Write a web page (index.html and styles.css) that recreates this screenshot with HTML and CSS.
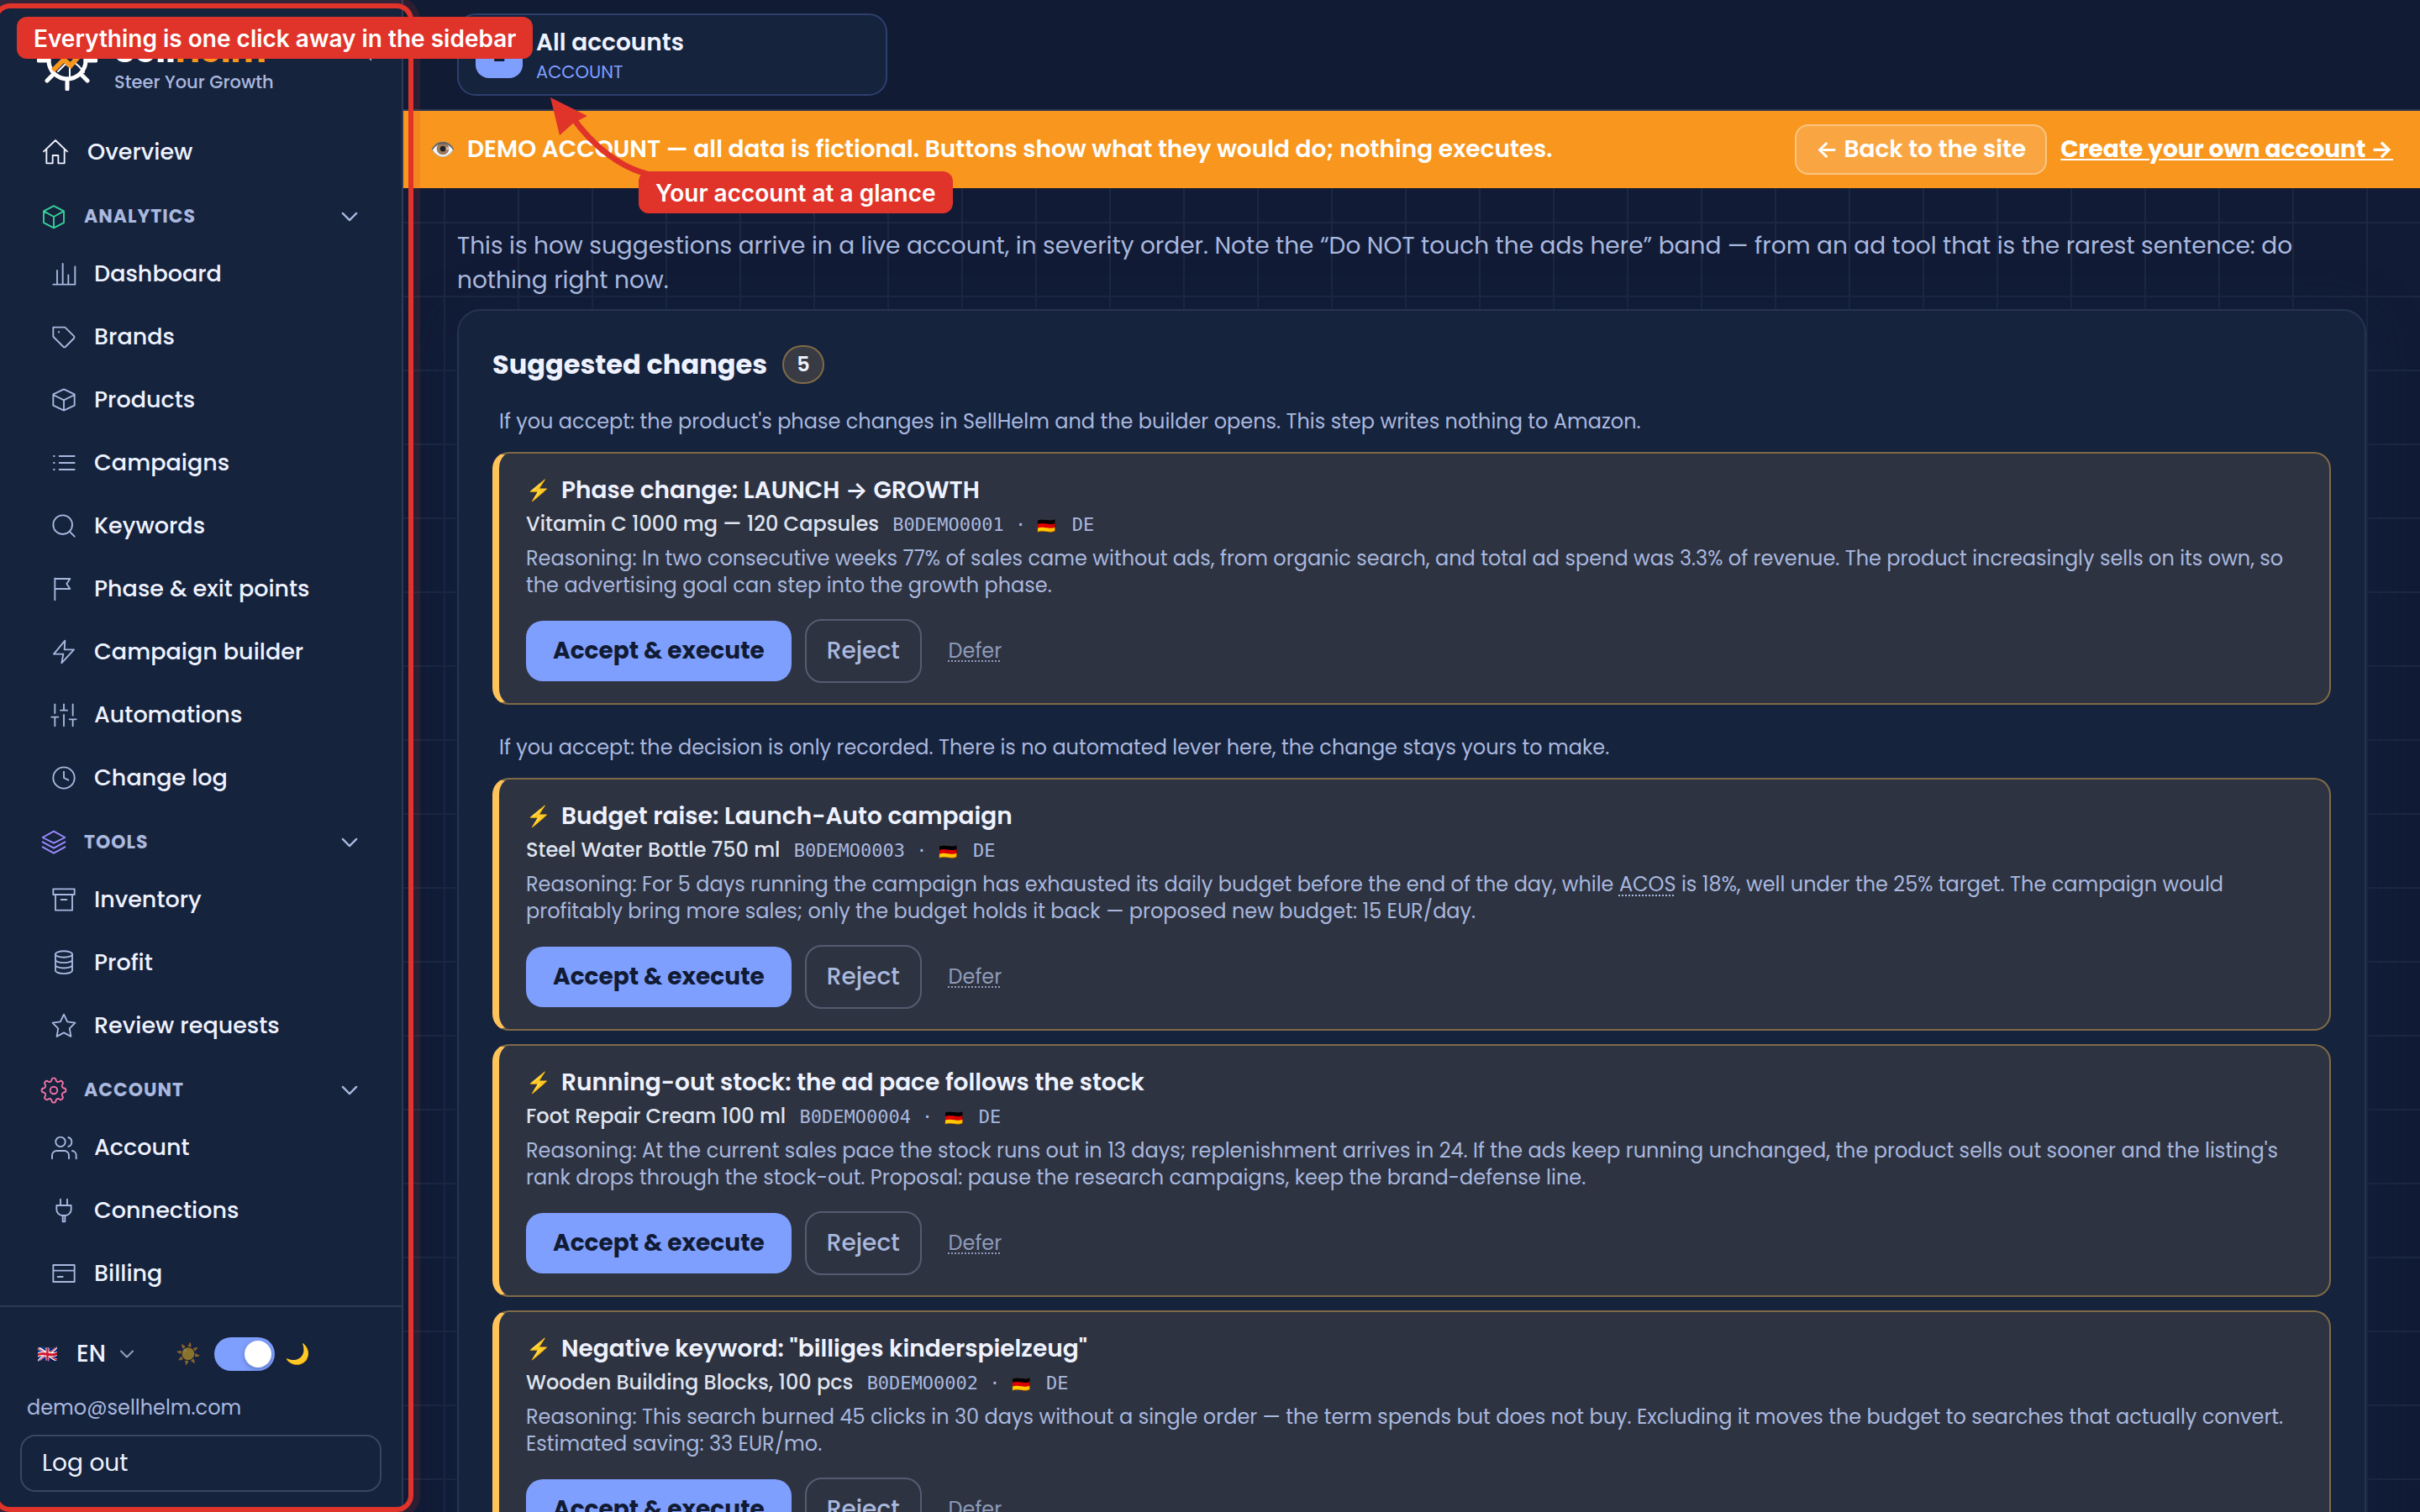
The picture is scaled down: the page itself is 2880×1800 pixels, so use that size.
FILE: index.html
```html
<!doctype html>
<html lang="en">
<head>
<meta charset="utf-8">
<meta name="viewport" content="width=device-width, initial-scale=1">
<title>SellHelm – Suggested changes</title>
<link rel="stylesheet" href="styles.css">
</head>
<body>

<svg class="sprite" aria-hidden="true">
	<symbol id="i-home" viewBox="0 0 24 24"><path d="M1.5 11.5 12 1.5l10.5 10M4 9.5V22h5.5v-7h5v7H20V9.5"/></symbol>
	<symbol id="i-cube" viewBox="0 0 24 24"><path d="M12 2.3 21 7v10.3L12 22l-9-4.7V7zM3 7l9 5 9-5M12 12v10"/></symbol>
	<symbol id="i-chart" viewBox="0 0 24 24"><path d="M2.500 21.500h19.500V5.500M6 21.500V9M11 21.500V3M16 21.500V13"/></symbol>
	<symbol id="i-tag" viewBox="0 0 24 24"><path d="M2.500 3.500v8.300l9 9a1.500 1.500 0 0 0 2 0l7.500-7.500a1.500 1.500 0 0 0 0-2l-8-7.800z"/><path d="M7.500 7.500v.5"/></symbol>
	<symbol id="i-box" viewBox="0 0 24 24"><path d="M12 2.500 21.500 7v10L12 21.500 2.500 17V7zM2.500 7.500 12 12.300l9.500-4.800M12 12.300v9"/></symbol>
	<symbol id="i-list" viewBox="0 0 24 24"><path d="M8 6h13.500M8 12h13.500M8 18h13.500M3 6h.5M3 12h.5M3 18h.5"/></symbol>
	<symbol id="i-search" viewBox="0 0 24 24"><circle cx="11" cy="11" r="8.500"/><path d="m17 17 4.500 4.500"/></symbol>
	<symbol id="i-flag" viewBox="0 0 24 24"><path d="M4 22V2.500M4 3h13.500l-3 4.500 3 4.500H4"/></symbol>
	<symbol id="i-bolt" viewBox="0 0 24 24"><path d="M13 2 3 14h8.500L10 22l11-12h-8.500z"/></symbol>
	<symbol id="i-sliders" viewBox="0 0 24 24"><path d="M4 2.500v8M4 14v8M1 14h6M12 2.500V8M12 12v10M9 8h6M20 2.500v10M20 16v6M17 16h6"/></symbol>
	<symbol id="i-clock" viewBox="0 0 24 24"><circle cx="12" cy="12" r="9.500"/><path d="M12 6.500V12l4 2"/></symbol>
	<symbol id="i-layers" viewBox="0 0 24 24"><path d="m12 2 10 5.500-10 5L2 7.500zM2 11.500l10 5.500 10-5.500M2 16l10 5.500L22 16"/></symbol>
	<symbol id="i-archive" viewBox="0 0 24 24"><path d="M2.500 2.500h19v5h-19zM4.500 7.500v14h15v-14M9.500 12h5"/></symbol>
	<symbol id="i-coins" viewBox="0 0 24 24"><ellipse cx="12" cy="4.500" rx="7.500" ry="2.800"/><path d="M4.500 4.500v14.500c0 1.600 3.300 2.800 7.500 2.800s7.500-1.200 7.500-2.800V4.500M4.500 9.300c0 1.600 3.300 2.800 7.500 2.800s7.500-1.200 7.500-2.800M4.500 14.100c0 1.600 3.300 2.800 7.500 2.800s7.500-1.200 7.500-2.800"/></symbol>
	<symbol id="i-star" viewBox="0 0 24 24"><path d="m12 2 3.100 6.500 7 1-5 5 1.200 7.200L12 18.300l-6.300 3.400 1.200-7.200-5-5 7-1z"/></symbol>
	<symbol id="i-gear" viewBox="0 0 24 24"><circle cx="12" cy="12" r="3.200"/><path d="M10.100 2.800c.3-2.300 3.500-2.300 3.800 0 .2 1.500 1.900 2.200 3.100 1.300 1.900-1.400 4.100.8 2.700 2.700-.9 1.200-.1 3.100 1.400 3.300 2.300.3 2.300 3.500 0 3.800-1.500.2-2.300 2.100-1.400 3.300 1.400 1.900-.8 4.100-2.700 2.700-1.200-.9-2.900-.2-3.100 1.300-.3 2.300-3.500 2.300-3.800 0-.2-1.500-1.900-2.200-3.100-1.300-1.900 1.400-4.100-.8-2.700-2.700.9-1.200.1-3.100-1.400-3.300-2.300-.3-2.300-3.500 0-3.800 1.500-.2 2.300-2.100 1.400-3.300-1.400-1.900.8-4.100 2.700-2.700 1.200.9 2.900.2 3.100-1.300z"/></symbol>
	<symbol id="i-users" viewBox="0 0 24 24"><circle cx="9" cy="7" r="4.300"/><path d="M1.500 22v-3a4 4 0 0 1 4-4h7a4 4 0 0 1 4 4v3M16 3a4.300 4.300 0 0 1 0 8.200M23 22v-3a4 4 0 0 0-3.500-4"/></symbol>
	<symbol id="i-plug" viewBox="0 0 24 24"><path d="M9 7V2M15 7V2M5.500 7.500h13V11a5.500 5.500 0 0 1-5 5.500h-3a5.500 5.500 0 0 1-5-5.500zM11 16.500V22h2v-5.500"/></symbol>
	<symbol id="i-card" viewBox="0 0 24 24"><path d="M2.500 4.500h19v15h-19zM2.500 9.500h19M6.500 15h4.500"/></symbol>
	<symbol id="i-down" viewBox="0 0 24 24"><path d="m5 8.500 7 7 7-7"/></symbol>
	<symbol id="i-left" viewBox="0 0 24 24"><path d="m15 4-7 8 7 8"/></symbol>
</svg>

<div class="app">
	<aside class="sidebar">
		<div class="brand">
			<svg class="logo" viewBox="0 0 72 72" aria-hidden="true">
				<circle cx="36" cy="36" r="22"/>
				<path d="M36 2v12M36 58v12M2 36h12M58 36h12M12 12l8 8M60 12l-8 8M12 60l8-8M60 60l-8-8"/>
				<path class="logo-thin" d="m25 49 9-9 5 4v12M44 38l6 5 6 7"/>
				<path class="logo-trend" d="m19 48 13-13 8 7 13-15"/>
			</svg>
			<div class="brand-text">
				<div class="brand-name">Sell<span>Helm</span></div>
				<div class="brand-sub">Steer Your Growth</div>
			</div>
			<button class="collapse" type="button" aria-label="Collapse"><svg class="icon"><use href="#i-left"/></svg></button>
		</div>

		<nav class="nav">
			<a class="nav-top" href="#"><svg class="icon"><use href="#i-home"/></svg>Overview</a>

			<button class="nav-group green" type="button"><svg class="icon"><use href="#i-cube"/></svg>ANALYTICS<svg class="icon caret"><use href="#i-down"/></svg></button>
			<ul>
				<li><a href="#"><svg class="icon"><use href="#i-chart"/></svg>Dashboard</a></li>
				<li><a href="#"><svg class="icon"><use href="#i-tag"/></svg>Brands</a></li>
				<li><a href="#"><svg class="icon"><use href="#i-box"/></svg>Products</a></li>
				<li><a href="#"><svg class="icon"><use href="#i-list"/></svg>Campaigns</a></li>
				<li><a href="#"><svg class="icon"><use href="#i-search"/></svg>Keywords</a></li>
				<li><a href="#"><svg class="icon"><use href="#i-flag"/></svg>Phase &amp; exit points</a></li>
				<li><a href="#"><svg class="icon"><use href="#i-bolt"/></svg>Campaign builder</a></li>
				<li><a href="#"><svg class="icon"><use href="#i-sliders"/></svg>Automations</a></li>
				<li><a href="#"><svg class="icon"><use href="#i-clock"/></svg>Change log</a></li>
			</ul>

			<button class="nav-group violet" type="button"><svg class="icon"><use href="#i-layers"/></svg>TOOLS<svg class="icon caret"><use href="#i-down"/></svg></button>
			<ul>
				<li><a href="#"><svg class="icon"><use href="#i-archive"/></svg>Inventory</a></li>
				<li><a href="#"><svg class="icon"><use href="#i-coins"/></svg>Profit</a></li>
				<li><a href="#"><svg class="icon"><use href="#i-star"/></svg>Review requests</a></li>
			</ul>

			<button class="nav-group pink" type="button"><svg class="icon"><use href="#i-gear"/></svg>ACCOUNT<svg class="icon caret"><use href="#i-down"/></svg></button>
			<ul>
				<li><a href="#"><svg class="icon"><use href="#i-users"/></svg>Account</a></li>
				<li><a href="#"><svg class="icon"><use href="#i-plug"/></svg>Connections</a></li>
				<li><a href="#"><svg class="icon"><use href="#i-card"/></svg>Billing</a></li>
			</ul>
		</nav>

		<div class="side-foot">
			<div class="prefs">
				<label class="lang">
					<span class="flag">🇬🇧</span>
					<select aria-label="Language"><option>EN</option></select>
					<svg class="icon"><use href="#i-down"/></svg>
				</label>
				<label class="theme">
					<span class="sun">☀️</span>
					<input type="checkbox" aria-label="Dark theme" checked>
					<span>🌙</span>
				</label>
			</div>
			<div class="email">demo@sellhelm.com</div>
			<button class="logout" type="button">Log out</button>
		</div>
	</aside>

	<div class="page">
		<header class="topbar">
			<button class="account" type="button">
				<span class="account-badge">2</span>
				<span class="account-text"><b>All accounts</b><small>ACCOUNT</small></span>
			</button>
		</header>

		<div class="banner">
			<span class="eye">👁️</span>
			<span class="banner-text">DEMO ACCOUNT — all data is fictional. Buttons show what they would do; nothing executes.</span>
			<a class="back" href="#">← Back to the site</a>
			<a class="create" href="#">Create your own account →</a>
		</div>

		<main class="content">
			<p class="intro">This is how suggestions arrive in a live account, in severity order. Note the “Do NOT touch the ads here” band — from an ad tool that is the rarest sentence: do nothing right now.</p>

			<section class="panel">
				<h2>Suggested changes <span class="count">5</span></h2>

				<p class="hint">If you accept: the product's phase changes in SellHelm and the builder opens. This step writes nothing to Amazon.</p>
				<article class="item">
					<h3><span class="zap">⚡</span>Phase change: LAUNCH → GROWTH</h3>
					<div class="product">Vitamin C 1000 mg — 120 Capsules <code>B0DEMO0001 · <span class="flag">🇩🇪</span> DE</code></div>
					<p class="reason">Reasoning: In two consecutive weeks 77% of sales came without ads, from organic search, and total ad spend was 3.3% of revenue. The product increasingly sells on its own, so the advertising goal can step into the growth phase.</p>
					<div class="actions">
						<button class="accept" type="button">Accept &amp; execute</button>
						<button class="reject" type="button">Reject</button>
						<button class="defer" type="button">Defer</button>
					</div>
				</article>

				<p class="hint">If you accept: the decision is only recorded. There is no automated lever here, the change stays yours to make.</p>
				<article class="item">
					<h3><span class="zap">⚡</span>Budget raise: Launch-Auto campaign</h3>
					<div class="product">Steel Water Bottle 750 ml <code>B0DEMO0003 · <span class="flag">🇩🇪</span> DE</code></div>
					<p class="reason">Reasoning: For 5 days running the campaign has exhausted its daily budget before the end of the day, while <abbr>ACOS</abbr> is 18%, well under the 25% target. The campaign would profitably bring more sales; only the budget holds it back — proposed new budget: 15 EUR/day.</p>
					<div class="actions">
						<button class="accept" type="button">Accept &amp; execute</button>
						<button class="reject" type="button">Reject</button>
						<button class="defer" type="button">Defer</button>
					</div>
				</article>

				<article class="item">
					<h3><span class="zap">⚡</span>Running-out stock: the ad pace follows the stock</h3>
					<div class="product">Foot Repair Cream 100 ml <code>B0DEMO0004 · <span class="flag">🇩🇪</span> DE</code></div>
					<p class="reason">Reasoning: At the current sales pace the stock runs out in 13 days; replenishment arrives in 24. If the ads keep running unchanged, the product sells out sooner and the listing's rank drops through the stock-out. Proposal: pause the research campaigns, keep the brand-defense line.</p>
					<div class="actions">
						<button class="accept" type="button">Accept &amp; execute</button>
						<button class="reject" type="button">Reject</button>
						<button class="defer" type="button">Defer</button>
					</div>
				</article>

				<article class="item">
					<h3><span class="zap">⚡</span>Negative keyword: "billiges kinderspielzeug"</h3>
					<div class="product">Wooden Building Blocks, 100 pcs <code>B0DEMO0002 · <span class="flag">🇩🇪</span> DE</code></div>
					<p class="reason">Reasoning: This search burned 45 clicks in 30 days without a single order — the term spends but does not buy. Excluding it moves the budget to searches that actually convert. Estimated saving: 33 EUR/mo.</p>
					<div class="actions">
						<button class="accept" type="button">Accept &amp; execute</button>
						<button class="reject" type="button">Reject</button>
						<button class="defer" type="button">Defer</button>
					</div>
				</article>
			</section>
		</main>
	</div>
</div>

<!-- callouts -->
<div class="callout-frame"></div>
<svg class="callout-arrow" viewBox="0 0 150 110" aria-hidden="true">
	<path class="line" d="M142 102C98 96 62 64 38 30"/>
	<path class="head" d="m13 8 44 22-16 8-17 15z"/>
</svg>
<div class="callout callout-side">Everything is one click away in the sidebar</div>
<div class="callout callout-account">Your account at a glance</div>

</body>
</html>
```
FILE: styles.css
```css
*{margin:0;padding:0;box-sizing:border-box;}
html{overflow:hidden;}
body{
	background:#111b35;
	color:#eef2ff;
	font:400 24px/32px Poppins, Inter, sans-serif;
}
ul{list-style:none;}
a{color:inherit;text-decoration:none;}
button, select{
	font:inherit;
	color:inherit;
	background:none;
	border:0;
	cursor:pointer;
}
.sprite{position:absolute;width:0;height:0;}
.icon{
	width:32px;
	height:32px;
	flex:none;
	fill:none;
	stroke:currentColor;
	stroke-width:1.4;
	stroke-linecap:round;
	stroke-linejoin:round;
}
.app{
	display:flex;
	height:100vh;
	overflow:hidden;
}

/* sidebar */
.sidebar{
	width:480px;
	flex:none;
	display:flex;
	flex-direction:column;
	background:#16233d;
	border-right:2px solid #2d3a55;
}
.brand{
	display:flex;
	align-items:center;
	height:143px;
	padding:0 26px 0 44px;
}
.logo{
	width:72px;
	height:72px;
	fill:none;
	stroke:#fff;
	stroke-width:5;
	stroke-linecap:round;
}
.logo .logo-thin{stroke-width:2;}
.logo .logo-trend{stroke:#f8961e;stroke-width:6;stroke-linecap:butt;}
.brand-text{margin-left:20px;padding-top:8px;}
.brand-name{font-size:40px;line-height:44px;font-weight:700;color:#fff;}
.brand-name span{color:#f8961e;}
.brand-sub{
	font-size:21px;
	font-weight:500;
	color:#a9b8de;
}
.collapse{margin:0 0 16px auto;height:32px;color:#a9b8de;}
.collapse .icon{width:28px;height:28px;}
.nav{flex:1;overflow:hidden;}
.nav a{
	display:flex;
	align-items:center;
	height:75px;
	padding-left:60px;
	gap:20px;
	font-size:27px;
	font-weight:500;
}
.nav li .icon{color:#a9b8de;}
.nav .nav-top{padding-left:50px;gap:22px;}
.nav-group{
	display:flex;
	align-items:center;
	gap:20px;
	width:100%;
	height:60px;
	margin-top:10px;
	padding:0 48px;
	font-size:22px;
	font-weight:700;
	letter-spacing:1px;
	color:#a9b8de;
}
.green .icon{color:#34d399;}
.violet .icon{color:#9b8cff;}
.pink .icon{color:#f472a6;}
.nav-group .caret{
	width:28px;
	height:28px;
	margin-left:auto;
	color:#a9b8de;
	stroke-width:2;
}
.side-foot{
	border-top:2px solid #2d3a55;
	padding:26px 24px 24px;
}
.prefs{
	display:flex;
	align-items:center;
	height:60px;
	gap:46px;
	padding-left:20px;
}
.lang{
	display:flex;
	align-items:center;
	font-size:28px;
	font-weight:500;
}
.lang .flag{font-size:20px;}
.lang select{
	appearance:none;
	margin-left:22px;
	width:48px;
}
.lang .icon{width:24px;height:24px;stroke-width:2;color:#97a0b5;}
.theme{display:flex;align-items:center;gap:12px;font-size:24px;}
.sun{opacity:.5;margin-right:4px;}
.theme input{
	appearance:none;
	width:72px;
	height:40px;
	border-radius:20px;
	padding:4px;
	background:#7f9fff;
	display:flex;
	justify-content:flex-end;
}
.theme input::before{
	content:"";
	width:32px;
	height:32px;
	border-radius:50%;
	background:#fff;
	box-shadow:0 2px 6px rgba(0,0,0,.25);
}
.email{
	margin:16px 8px 14px;
	line-height:36px;
	color:#a9b8de;
}
.logout{
	display:block;
	width:100%;
	height:68px;
	padding:0 24px;
	border:2px solid #3a465f;
	border-radius:18px;
	font-size:28px;
	text-align:left;
}

/* top */
.page{
	flex:1;
	min-width:0;
	background-image:
		linear-gradient(#1c2741 2px, transparent 2px),
		linear-gradient(90deg, #1c2741 2px, transparent 2px);
	background-size:88px 88px;
	background-position:48px 0;
}
.topbar{
	height:132px;
	padding:16px 64px;
	background:#111b33;
	border-bottom:2px solid #2d3a55;
}
.account{
	display:flex;
	align-items:center;
	gap:16px;
	width:512px;
	height:98px;
	padding:0 20px;
	background:#16233d;
	border:2px solid #2d3f6d;
	border-radius:22px;
	text-align:left;
}
.account-badge{
	width:56px;
	height:56px;
	border-radius:16px;
	background:#7f9fff;
	color:#111b33;
	font-weight:700;
	line-height:56px;
	text-align:center;
}
.account-text{padding-top:4px;}
.account-text b, .account-text small{display:block;}
.account-text b{font-size:28px;font-weight:600;line-height:38px;}
.account-text small{font-size:21px;color:#7f9fff;}
.banner{
	display:flex;
	align-items:center;
	gap:16px;
	height:92px;
	padding:0 32px;
	background:#f8961e;
	color:#fff;
	font-size:28px;
	font-weight:600;
}
.eye{width:28px;font-size:24px;}
.banner-text{flex:1;}
.back{
	height:60px;
	padding:0 23px;
	line-height:56px;
	border:2px solid rgba(255,255,255,.35);
	border-radius:16px;
	background:rgba(255,255,255,.16);
}
.create{font-weight:700;text-decoration:underline;}

/* content */
.content{padding:48px 64px;}
.intro{
	font-size:28px;
	line-height:41px;
	color:#a9b8de;
	margin-bottom:14px;
}
.panel{
	padding:40px;
	background:#16233d;
	border:2px solid #27344f;
	border-radius:28px;
	box-shadow:0 8px 56px rgba(20,36,72,.6);
}
.panel h2{
	display:flex;
	align-items:center;
	gap:18px;
	height:48px;
	margin-bottom:26px;
	font-size:32px;
	font-weight:700;
}
.count{
	height:46px;
	min-width:50px;
	border:2px solid #7f6a47;
	border-radius:23px;
	background:#383b44;
	font-size:24px;
	font-weight:600;
	line-height:42px;
	text-align:center;
}
.hint{
	line-height:36px;
	margin:0 8px 18px;
	color:#a9b8de;
}
.item{
	padding:24px 32px;
	background:#2e3341;
	border:2px solid #7f6a47;
	border-left:8px solid #ffc35c;
	border-radius:20px;
}
.item + .item{margin-top:16px;}
.item + .hint{margin-top:33px;}
.item h3{
	display:flex;
	align-items:center;
	gap:10px;
	height:40px;
	font-size:28px;
	font-weight:600;
}
.zap{width:32px;font-size:24px;}
.product{
	height:40px;
	line-height:40px;
	font-size:24px;
	font-weight:500;
	color:#dfe3ee;
}
.product code{
	margin-left:10px;
	font:400 22px "DejaVu Sans Mono", monospace;
	color:#a9b8de;
}
.product .flag{font-size:18px;margin-right:6px;}
.reason{
	margin:5px 0 24px;
	color:#a9b8de;
}
.reason abbr{
	text-decoration:underline dotted 2px;
	text-underline-offset:4px;
}
.actions{
	display:flex;
	align-items:center;
	gap:16px;
	height:76px;
}
.accept, .reject{font-size:28px;border-radius:20px;}
.accept{
	height:72px;
	padding:0 32px;
	background:#7f9fff;
	color:#111b33;
	font-weight:700;
}
.reject{
	height:76px;
	padding:0 24px;
	border:2px solid #565c70;
	color:#a9b8de;
	font-weight:500;
}
.defer{
	padding:0 16px;
	color:#8f9bb8;
	text-decoration:underline dotted 2px;
	text-underline-offset:3px;
}

/* callouts */
.callout-frame{
	position:absolute;
	top:4px;
	left:-8px;
	width:500px;
	height:calc(100vh - 4px);
	border:6px solid #e0332a;
	border-radius:20px;
	box-shadow:0 0 0 8px rgba(224,51,42,.15);
	pointer-events:none;
}
.callout{
	position:absolute;
	padding:2px 20px 0;
	border-radius:12px;
	background:#e0332a;
	color:#fff;
	font:600 28px/48px Inter, sans-serif;
}
.callout-side{top:20px;left:20px;}
.callout-account{top:204px;left:760px;}
.callout-arrow{
	position:absolute;
	top:108px;
	left:642px;
	width:150px;
	height:110px;
}
.callout-arrow .line{fill:none;stroke:#e0332a;stroke-width:7;}
.callout-arrow .head{fill:#e0332a;}
```
